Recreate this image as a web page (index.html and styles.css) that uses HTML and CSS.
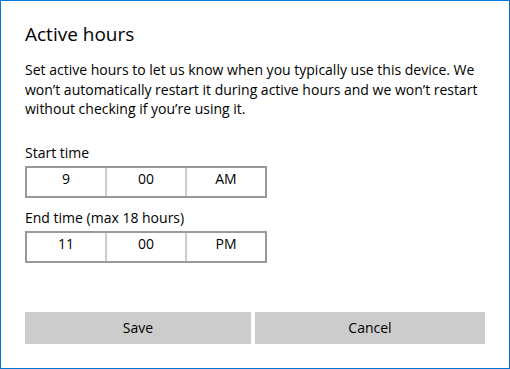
FILE: index.html
```html
<!DOCTYPE html>
<html lang="en">
<head>
<meta charset="utf-8">
<title>Active hours</title>
<link rel="stylesheet" href="styles.css">
</head>
<body>
<div class="dialog">
  <h1 class="title">Active hours</h1>
  <p class="desc">Set active hours to let us know when you typically use this device. We<br>won’t automatically restart it during active hours and we won’t restart<br>without checking if you’re using it.</p>
  <div class="field field-start">
    <div class="label">Start time</div>
    <div class="picker">
      <div class="seg">9</div>
      <div class="seg">00</div>
      <div class="seg">AM</div>
    </div>
  </div>
  <div class="field field-end">
    <div class="label">End time (max 18 hours)</div>
    <div class="picker">
      <div class="seg">11</div>
      <div class="seg">00</div>
      <div class="seg">PM</div>
    </div>
  </div>
  <div class="buttons">
    <button class="btn btn-save">Save</button>
    <button class="btn btn-cancel">Cancel</button>
  </div>
</div>
</body>
</html>
```
FILE: styles.css
```css
html, body {
  margin: 0;
  padding: 0;
  background: #ffffff;
}

.dialog {
  box-sizing: border-box;
  width: 510px;
  height: 369px;
  border: 1px solid #0078d7;
  padding: 20px 24px 24px;
  display: flex;
  flex-direction: column;
  font-family: "Open Sans", "Noto Sans", sans-serif;
  font-size: 14px;
  color: #000000;
  background: #ffffff;
}

.title {
  margin: 0;
  font-size: 19px;
  font-weight: 400;
  line-height: 26px;
}

.desc {
  margin: 13px 0 0;
  line-height: 19.5px;
  white-space: nowrap;
}

.field-start {
  margin-top: 24.5px;
}

.field-end {
  margin-top: 10px;
}

.label {
  line-height: 20px;
  margin-bottom: 3px;
}

.picker {
  box-sizing: border-box;
  width: 242px;
  height: 32px;
  border: 2px solid #999999;
  display: grid;
  grid-template-columns: 78px 78px 78px;
  column-gap: 2px;
  background: #cccccc;
}

.seg {
  background: #ffffff;
  text-align: center;
  line-height: 22px;
  padding-bottom: 6px;
}

.buttons {
  margin-top: auto;
  display: grid;
  grid-template-columns: 226px 230px;
  column-gap: 4px;
}

.btn {
  height: 32px;
  margin: 0;
  padding: 0;
  border: none;
  background: #cccccc;
  font-family: "Open Sans", "Noto Sans", sans-serif;
  font-size: 14px;
  line-height: 32px;
  color: #000000;
}
```
